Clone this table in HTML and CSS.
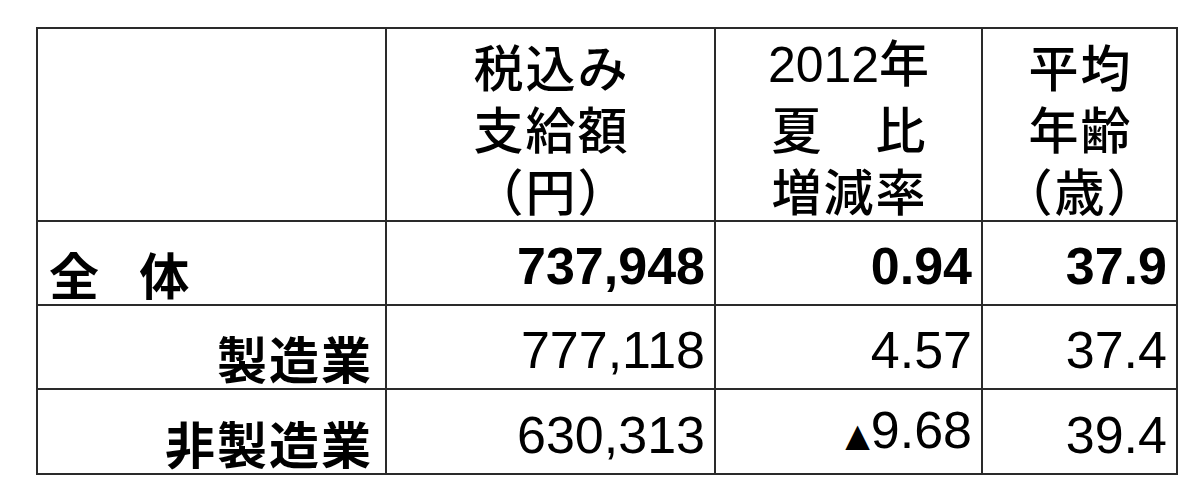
FILE: index.html
```html
<!DOCTYPE html>
<html lang="ja">
<head>
<meta charset="utf-8">
<title>賞与集計</title>
<link rel="stylesheet" href="styles.css">
</head>
<body>
<table class="bonus">
  <colgroup>
    <col class="c-label">
    <col class="c-amount">
    <col class="c-rate">
    <col class="c-age">
  </colgroup>
  <thead>
    <tr class="head-row">
      <th class="blank"></th>
      <th>税込み<br>支給額<br>（円）</th>
      <th><span class="lat">2012</span>年<br>夏　比<br>増減率</th>
      <th>平均<br>年齢<br>（歳）</th>
    </tr>
  </thead>
  <tbody>
    <tr class="total">
      <td class="label left">全 体</td>
      <td class="num">737,948</td>
      <td class="num">0.94</td>
      <td class="num">37.9</td>
    </tr>
    <tr>
      <td class="label">製造業</td>
      <td class="num">777,118</td>
      <td class="num">4.57</td>
      <td class="num">37.4</td>
    </tr>
    <tr class="last">
      <td class="label">非製造業</td>
      <td class="num">630,313</td>
      <td class="num"><span class="tri">▲</span>9.68</td>
      <td class="num">39.4</td>
    </tr>
  </tbody>
</table>
</body>
</html>
```

FILE: styles.css
```css
html, body {
  margin: 0;
  padding: 0;
  background: #ffffff;
}

body {
  padding: 28px 0 0 37px;
  color: #000;
  font-family: "Liberation Sans", Arial, "Noto Sans CJK JP", sans-serif;
}

.bonus {
  border-collapse: collapse;
  table-layout: fixed;
  width: 1140px;
  margin-top: -1px;
  margin-left: -1px;
}

.c-label { width: 349px; }
.c-amount { width: 329px; }
.c-rate { width: 267px; }
.c-age { width: 195px; }

.bonus th,
.bonus td {
  border: 2px solid #2a2a2a;
  padding: 0;
}

.head-row { height: 193px; }
.bonus tbody tr { height: 84px; }
.bonus tbody tr.last { height: 85px; }

.bonus th {
  font-family: "Noto Sans CJK JP", sans-serif;
  font-weight: 500;
  font-size: 50px;
  line-height: 62px;
  letter-spacing: 2px;
  text-align: center;
  vertical-align: bottom;
  padding-left: 2px;
}

.bonus th .lat {
  font-family: "Liberation Sans Narrow", "Liberation Sans", sans-serif;
  letter-spacing: 0;
}

.label {
  font-family: "Noto Sans CJK JP", sans-serif;
  font-weight: 700;
  font-size: 50px;
  line-height: 50px;
  letter-spacing: 2px;
  text-align: right;
  vertical-align: bottom;
  padding-right: 12px !important;
  padding-bottom: 6px !important;
}

.label.left {
  text-align: left;
  padding-left: 11px !important;
  word-spacing: 25px;
}

.num {
  font-size: 52px;
  line-height: 52px;
  text-align: right;
  vertical-align: bottom;
  padding-right: 9px !important;
  padding-bottom: 12px !important;
}

.total .num { font-weight: 700; }

.tri {
  font-family: "DejaVu Sans", sans-serif;
  font-size: 32px;
  vertical-align: 2px;
  margin-right: 1px;
}
```
